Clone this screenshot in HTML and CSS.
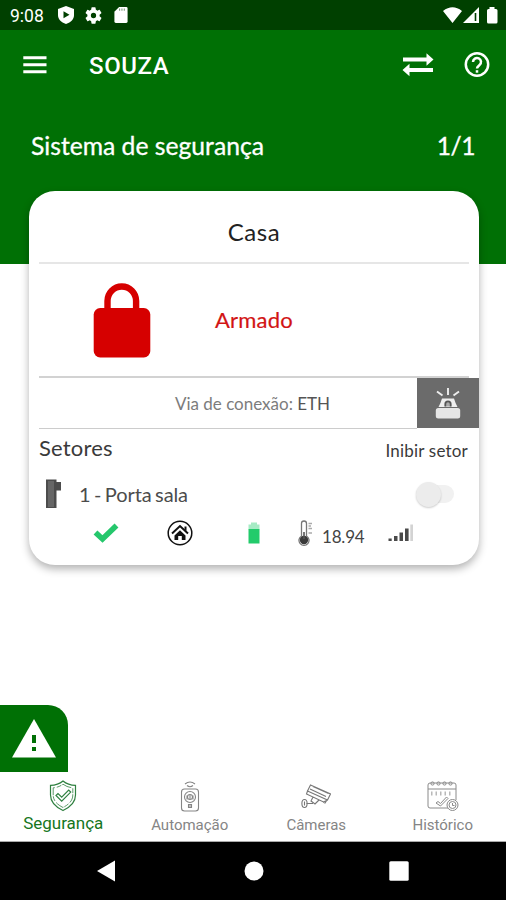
FILE: index.html
```html
<!DOCTYPE html>
<html lang="pt-BR">
<head>
<meta charset="utf-8">
<title>Souza</title>
<link rel="stylesheet" href="styles.css">
</head>
<body>
<div class="phone">
  <div class="status">
    <span class="clock">9:08</span>
    <svg class="st-shield" width="16" height="18" viewBox="0 0 16 18"><path fill="#fff" d="M8 0 16 3v6c0 4-3 7.500-8 9-5-1.500-8-5-8-9V3z"/><path fill="#004000" d="M5.500 5.300v7l6-3.500z"/></svg>
    <svg class="st-gear" width="17" height="17" viewBox="2 2 20 20"><path fill="#fff" d="M19.140 12.940a7 7 0 0 0 0-1.880l2.030-1.580a.5.5 0 0 0 .12-.61l-1.920-3.320a.5.5 0 0 0-.59-.22l-2.390.96a7 7 0 0 0-1.620-.94l-.36-2.540a.5.5 0 0 0-.48-.41h-3.840a.5.5 0 0 0-.47.41l-.36 2.540a7 7 0 0 0-1.620.94l-2.390-.96a.5.5 0 0 0-.59.22L2.740 8.870a.5.5 0 0 0 .12.610l2.030 1.580a7 7 0 0 0 0 1.880l-2.030 1.580a.5.5 0 0 0-.12.610l1.920 3.320c.12.220.37.290.59.220l2.390-.96a7 7 0 0 0 1.620.94l.36 2.540c.05.240.24.410.48.410h3.840c.24 0 .44-.17.470-.41l.36-2.540a7 7 0 0 0 1.620-.94l2.390.96c.22.080.47 0 .59-.22l1.920-3.320a.5.5 0 0 0-.12-.61zM12 15.100a3.100 3.100 0 1 1 0-6.200 3.100 3.100 0 0 1 0 6.200z"/></svg>
    <svg class="st-sd" width="14" height="16" viewBox="0 0 14 17"><path fill="#fff" d="M5 0h7.500Q14 0 14 1.500v14q0 1.500-1.500 1.500h-11Q0 17 0 15.500V5z"/><path stroke="#004000" stroke-opacity=".5" stroke-width="1.200" d="M5.500 1.500v2.500M8 1.500v2.500M10.500 1.500v2.500"/></svg>
    <svg class="st-net" width="56" height="17" viewBox="0 0 56 17"><path fill="#fff" d="M0 4Q9.500-3.500 19 4L9.500 16zM36 0v16H20z"/><path stroke="#004000" stroke-width="1.600" d="M32.500 6v8"/><path fill="#fff" d="M46.500 0h5v2H53q1.500 0 1.500 1.500V15q0 1.500-1.500 1.500h-7.500Q44 16.500 44 15V3.500Q44 2 45.500 2h1z"/></svg>
  </div>
  <header class="hero">
    <div class="appbar">
      <svg width="24" height="18" viewBox="0 0 24 18"><path stroke="#fff" stroke-width="2.900" d="M.3 1.700h23.200M.3 8.700h23.200M.3 15.700h23.200"/></svg>
      <h1>SOUZA</h1>
      <svg class="swap" width="32" height="24" viewBox="0 0 32 24"><path stroke="#fff" stroke-width="4" d="M1 6.500h25M6 17h25"/><path fill="#fff" d="M24.500.3 31.500 6.500l-7 6.200zM7.500 10.800.5 17l7 6.200z"/></svg>
      <svg width="26" height="26" viewBox="0 0 26 26" fill="none" stroke="#fff" stroke-width="2.500"><circle cx="13" cy="12.500" r="11.200"/><path d="M9 10a4 4 0 1 1 6.500 3.100C14 14.300 13 14.900 13 16.500"/><path d="M13 18.200v2.500"/></svg>
    </div>
    <div class="section"><span class="section-name">Sistema de segurança</span><span class="section-count">1/1</span></div>
  </header>
  <main class="main">
    <section class="card">
      <h2 class="card-title"><span>Casa</span></h2>
      <div class="state">
        <svg width="58" height="76" viewBox="0 0 58 76"><path fill="none" stroke="#d60000" stroke-width="6.400" d="M14.500 30V19a14.300 14.500 0 0 1 28.600 0v11"/><rect x=".7" y="26" width="56.600" height="49.500" rx="6.500" fill="#d60000"/></svg>
        <span class="armed">Armado</span>
      </div>
      <div class="link">
        <p class="via">Via de conexão: <b>ETH</b></p>
        <div class="siren">
          <svg width="26" height="32" viewBox="0 0 26 32"><path stroke="#eee" stroke-width="1.900" d="M2 4.500 7.500 8.500M13 1v7M24 4.500 18.500 8.500"/><path fill="#eee" d="M7 11.500h12q1.500 5 3.500 8.500h-19q2-3.500 3.500-8.500z"/><path d="M10.300 19.500V17a2.700 2.700 0 0 1 5.400 0v2.500" fill="#aaa" stroke="#555" stroke-width="1.800"/><rect x=".8" y="21" width="24.400" height="10.500" rx="2.500" fill="#e6e6e6"/></svg>
        </div>
      </div>
      <div class="sectors">
        <div class="sectors-head"><h3>Setores</h3><span class="inhibit">Inibir setor</span></div>
        <div class="sector">
          <svg width="16" height="30" viewBox="0 0 16 30"><path fill="#4c4c4c" d="M0 .5h10.500v28.500H0zM10.500 3h4.500v8.500h-4.500z"/><path fill="#666" d="M2 2h6v26H2z"/></svg>
          <span class="sector-name">1 - Porta sala</span>
          <span class="toggle"><i></i></span>
        </div>
        <div class="readings">
          <svg class="r-check" width="26" height="20" viewBox="0 0 26 20"><path fill="none" stroke="#25c76c" stroke-width="5.600" d="M2.500 9.500 9.500 16 23.500 2.500"/></svg>
          <svg class="r-home" width="26" height="26" viewBox="0 0 26 26"><circle cx="13" cy="13" r="11.800" fill="none" stroke="#111" stroke-width="1.500"/><path fill="none" stroke="#111" stroke-width="2" d="m5 13.500 8-7.500 8 7.500"/><path fill="#111" d="M17.500 6.500h2V11l-2-1.800zM13 10.200l5.500 5.200V20h-3.700v-4h-3.600v4H7.500v-4.600z"/></svg>
          <svg class="r-batt" width="12" height="22" viewBox="0 0 12 22"><path fill="#a5ebc4" d="M3 0.500h6v2h2.500v5H.5v-5H3z"/><path fill="#22cb6b" d="M.5 7h11v14.500H.5z"/></svg>
          <svg class="r-temp" width="16" height="26" viewBox="0 0 16 26"><path fill="#fff" stroke="#777" stroke-width="1.300" d="M3.500 16V3.500a2.500 2.500 0 0 1 5 0V16a5 5 0 1 1-5 0z"/><circle cx="6" cy="20" r="4.200" fill="#3a3a3a"/><path stroke="#555" stroke-width="1.600" d="M6 12v7"/><path stroke="#aaa" stroke-width="1.300" d="M10.500 3.500H14M10.500 6H13M10.500 8.500H14M10.500 13H14"/></svg>
          <span class="temp">18.94</span>
          <svg class="r-sig" width="26" height="18" viewBox="0 0 26 18"><path fill="#4a4a4a" d="M.5 14.500h3.200V17H.5zM6 12h3.500v5H6zM11.500 8.500H15V17h-3.500zM17 4.500h3.600V17H17z"/><path fill="#d3d3d3" d="M22.300.5h2.700V17h-2.700z"/></svg>
        </div>
      </div>
    </section>
    <div class="alert"><svg width="44" height="39" viewBox="0 0 44 39"><path fill="#fff" d="M22 0 44 38.500H0z"/><path fill="#007005" d="M20 16h4v8h-4zM20 28h4v4h-4z"/></svg></div>
  </main>
  <nav class="tabs">
    <a class="tab active">
      <svg width="28" height="32" viewBox="0 0 28 32" fill="none" stroke="#2f8040" stroke-width="1.200"><path d="M14 1q5 4.300 12.500 4.300V15c0 7.500-5 12-12.500 15.500C6.500 27 1.500 22.500 1.500 15V5.300Q9 5.300 14 1z"/><path stroke-dasharray="9 2 5 1" stroke-width=".8" d="M14 4.200q4.500 3.300 9.800 3.600V15c0 5.700-4 9.500-9.800 12.500C8.200 24.500 4.200 20.700 4.200 15V7.800Q9.500 7.500 14 4.200z"/><path d="m7 15.500 2-2 3.700 3.600 7-7 2 2-9 9z"/></svg>
      <span>Segurança</span>
    </a>
    <a class="tab">
      <svg width="20" height="32" viewBox="0 0 20 32" fill="none" stroke="#858585" stroke-width="1.100"><path d="M5 4q5-4 10 0M7 5.500q3 2.500 6 0"/><rect x="1.500" y="9" width="17" height="22" rx="3"/><circle cx="10" cy="17" r="5.500"/><circle cx="10" cy="17" r="2.500"/><path d="M10 15v4M7 15.500v4M13 15.500v4M8.500 24.500h3v3h-3zM9 26h2"/></svg>
      <span>Automação</span>
    </a>
    <a class="tab">
      <svg width="30" height="32" viewBox="0 0 30 32" fill="none" stroke="#777" stroke-width="1.100"><path d="m9.500 5 20 9-3 6L6.500 11zM6.500 11l-1 3 17 8 4-2M12 6.500l15.500 7M9 9l16 7.500M22 22l2 1 2-3M12 17l-2 4 4 3 4-4M12 23.500H5.500"/><ellipse cx="3.500" cy="23.500" rx="2.600" ry="4"/><path d="M3.500 21.500v4"/></svg>
      <span>Câmeras</span>
    </a>
    <a class="tab">
      <svg width="32" height="32" viewBox="0 0 32 32" fill="none" stroke="#8a8a8a" stroke-width="1"><path d="M22 28H3q-2 0-2-2V5q0-2 2-2h24q2 0 2 2v15M1 9h28"/><g><circle cx="5.500" cy="3.500" r="1.600"/><circle cx="11.500" cy="3.500" r="1.600"/><circle cx="17.500" cy="3.500" r="1.600"/><circle cx="23.500" cy="3.500" r="1.600"/></g><path stroke-dasharray="1.500 3" stroke-width="4" opacity=".6" d="M4 13.500h22"/><path d="m9 23 2-1.500 2.500 2 6-6.500 1.500 1.500-7.500 7.500z"/><circle cx="25.500" cy="25" r="5.500" fill="#fff"/><circle cx="25.500" cy="25" r="3.500"/><path d="M25.500 23v2.500h2"/></svg>
      <span>Histórico</span>
    </a>
  </nav>
  <div class="sysnav">
    <svg width="18" height="22" viewBox="0 0 18 22"><path fill="#fff" d="M18 .5v21L0 11z"/></svg>
    <svg class="home-key" width="20" height="20" viewBox="0 0 20 20"><circle cx="10" cy="10" r="9.500" fill="#fff"/></svg>
    <svg width="20" height="20" viewBox="0 0 20 20"><rect x=".3" y=".3" width="19.400" height="19.400" rx="1.500" fill="#fff"/></svg>
  </div>
</div>
</body>
</html>
```
FILE: styles.css
```css
* { box-sizing: border-box; }
body { margin: 0; background: #fff; font-family: Lato, "Liberation Sans", sans-serif; }
h1, h2, h3, p { margin: 0; font-weight: 400; }
svg { display: block; flex: none; }
span, h1, h3, p { white-space: nowrap; }
.phone { width: 506px; height: 900px; display: flex; flex-direction: column; overflow: hidden; }

.status { height: 30px; flex: none; background: #004000; display: flex; align-items: center; padding: 0 7px 0 10px; color: #fff; }
.clock { width: 48px; padding-top: 2px; font: 400 17.500px/30px Roboto, sans-serif; }
.st-gear { margin-left: 11px; }
.st-sd { margin-left: 12px; }
.st-net { margin-left: auto; }

.hero { height: 234px; flex: none; background: #007005; color: #fff; }
.appbar { height: 69px; display: flex; align-items: center; padding: 0 16px 0 23px; }
.appbar h1 { font: 500 24px/30px Roboto, sans-serif; letter-spacing: .6px; margin: 2px auto 0 42px; }
.swap { margin-right: 30px; }
.section { display: flex; justify-content: space-between; align-items: center; padding: 0 31px; height: 92px; font-size: 24.700px; -webkit-text-stroke: .3px #fff; }
.section-count { letter-spacing: -.5px; }

.main { flex: 1; display: flex; flex-direction: column; justify-content: space-between; margin-top: -73px; align-items: flex-start; }
.card { width: 450px; height: 374px; margin-left: 29px; background: #fff; border-radius: 26px; box-shadow: 0 4px 9px rgba(0, 0, 0, .3); }
.card-title { height: 73px; margin: 0 10px; border-bottom: 2px solid #e6e6e6; display: flex; align-items: center; justify-content: center; padding-top: 10px; font-size: 24px; letter-spacing: .6px; color: #222; }
.state { height: 114px; margin: 0 10px; display: flex; align-items: center; padding-left: 54px; border-bottom: 2px solid #d2d2d2; }
.armed { margin: -1px 0 0 64px; font-size: 22px; letter-spacing: .2px; color: #d21414; -webkit-text-stroke: .2px #d21414; }
.link { display: flex; height: 50px; margin-bottom: 1px; }
.via { flex: 1; margin-left: 10px; padding-left: 49px; text-align: center; border-bottom: 1px solid #ccc; font-size: 17px; line-height: 51px; height: 51px; color: #7c7c7c; }
.via b { font-weight: 400; color: #555; }
.siren { width: 62px; height: 50px; background: #6b6b6b; display: flex; align-items: center; justify-content: center; }
.sectors { padding: 0 10px; }
.sectors-head { height: 41px; display: flex; justify-content: space-between; align-items: center; color: #3a3a3a; }
.sectors-head h3 { font-size: 22px; letter-spacing: .2px; margin-top: -5px; }
.inhibit { font-size: 17px; letter-spacing: .2px; padding: 1px 1px 0 0; }
.sector { height: 48px; display: flex; align-items: center; padding: 0 15px 0 7px; }
.sector-name { margin: -1px 0 0 17px; font-size: 20px; letter-spacing: -.1px; word-spacing: -1.500px; color: #4c4c4c; }
.toggle { margin-left: auto; width: 38px; height: 18px; border-radius: 9px; background: #f1f1f1; display: flex; align-items: center; }
.toggle i { width: 25px; height: 25px; flex: none; border-radius: 50%; background: #ececec; box-shadow: 0 1px 2px rgba(0, 0, 0, .2); }
.readings { display: flex; align-items: center; height: 30px; padding-left: 54px; }
.r-home { margin-left: 48px; }
.r-batt { margin-left: 55px; }
.r-temp { margin-left: 38px; }
.temp { margin-left: 8px; font-size: 17px; padding-top: 6px; color: #444; width: 43px; letter-spacing: -.2px; }
.r-sig { margin-left: 23px; }
.alert { width: 68px; height: 67px; background: #007005; border-top-right-radius: 20px; display: flex; align-items: center; justify-content: center; }

.tabs { height: 70px; flex: none; display: grid; grid-template-columns: repeat(4, 1fr); background: #fff; border-bottom: 1px solid #aaa; font-family: Roboto, sans-serif; font-size: 15px; color: #858585; }
.tab { display: flex; flex-direction: column; align-items: center; padding-top: 8px; }
.tab span { line-height: 20px; margin-top: 3px; }
.active { color: #16761d; }
.active span { font-size: 17px; margin-top: 1px; }
.sysnav { height: 58px; flex: none; background: #000; display: flex; align-items: center; justify-content: space-between; padding: 0 97px; }
.home-key { margin-left: 3px; }
```
